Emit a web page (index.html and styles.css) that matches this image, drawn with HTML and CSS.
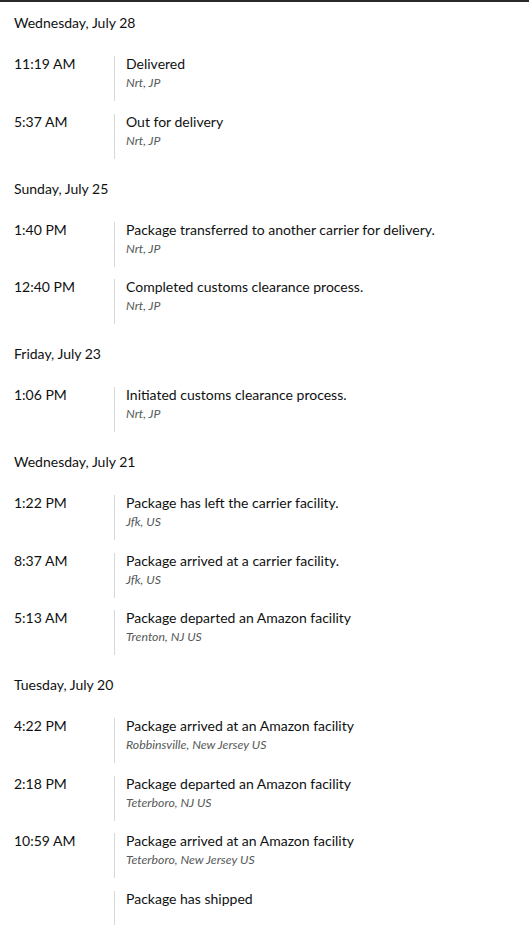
FILE: index.html
```html
<!DOCTYPE html>
<html lang="en">
<head>
<meta charset="utf-8">
<title>Tracking</title>
<link rel="stylesheet" href="styles.css">
</head>
<body>
<main class="tracking">
  <section class="day">
    <h3 class="day-title">Wednesday, July 28</h3>
    <ul class="events">
      <li class="event"><span class="time">11:19 AM</span><div class="detail"><div class="status">Delivered</div><div class="loc">Nrt, JP</div></div></li>
      <li class="event"><span class="time">5:37 AM</span><div class="detail"><div class="status">Out for delivery</div><div class="loc">Nrt, JP</div></div></li>
    </ul>
  </section>
  <section class="day">
    <h3 class="day-title">Sunday, July 25</h3>
    <ul class="events">
      <li class="event"><span class="time">1:40 PM</span><div class="detail"><div class="status">Package transferred to another carrier for delivery.</div><div class="loc">Nrt, JP</div></div></li>
      <li class="event"><span class="time">12:40 PM</span><div class="detail"><div class="status">Completed customs clearance process.</div><div class="loc">Nrt, JP</div></div></li>
    </ul>
  </section>
  <section class="day">
    <h3 class="day-title">Friday, July 23</h3>
    <ul class="events">
      <li class="event"><span class="time">1:06 PM</span><div class="detail"><div class="status">Initiated customs clearance process.</div><div class="loc">Nrt, JP</div></div></li>
    </ul>
  </section>
  <section class="day">
    <h3 class="day-title">Wednesday, July 21</h3>
    <ul class="events">
      <li class="event"><span class="time">1:22 PM</span><div class="detail"><div class="status">Package has left the carrier facility.</div><div class="loc">Jfk, US</div></div></li>
      <li class="event"><span class="time">8:37 AM</span><div class="detail"><div class="status">Package arrived at a carrier facility.</div><div class="loc">Jfk, US</div></div></li>
      <li class="event"><span class="time">5:13 AM</span><div class="detail"><div class="status">Package departed an Amazon facility</div><div class="loc">Trenton, NJ US</div></div></li>
    </ul>
  </section>
  <section class="day">
    <h3 class="day-title">Tuesday, July 20</h3>
    <ul class="events">
      <li class="event"><span class="time">4:22 PM</span><div class="detail"><div class="status">Package arrived at an Amazon facility</div><div class="loc">Robbinsville, New Jersey US</div></div></li>
      <li class="event"><span class="time">2:18 PM</span><div class="detail"><div class="status">Package departed an Amazon facility</div><div class="loc">Teterboro, NJ US</div></div></li>
      <li class="event"><span class="time">10:59 AM</span><div class="detail"><div class="status">Package arrived at an Amazon facility</div><div class="loc">Teterboro, New Jersey US</div></div></li>
      <li class="event"><span class="time"></span><div class="detail"><div class="status">Package has shipped</div></div></li>
    </ul>
  </section>
</main>
</body>
</html>
```

FILE: styles.css
```css
html, body {
  margin: 0;
  padding: 0;
  background: #ffffff;
}
body {
  border-top: 2px solid #2a2a2a;
  font-family: Lato, "Liberation Sans", sans-serif;
  color: #0f1111;
  font-size: 14px;
}
.tracking {
  padding: 11px 0 0 14px;
}
.day {
  display: flex;
  flex-direction: column;
}
.day + .day {
  margin-top: 20px;
}
.day-title {
  margin: 0;
  font-size: 14px;
  font-weight: 400;
  line-height: 20px;
}
.events {
  list-style: none;
  margin: 23px 0 0;
  padding: 0;
  display: flex;
  flex-direction: column;
  gap: 12.5px;
}
.event {
  display: flex;
  min-height: 45px;
}
.time {
  width: 100px;
  flex: none;
  line-height: 16px;
}
.detail {
  border-left: 1px solid #d5d9d9;
  padding-left: 11px;
}
.status {
  line-height: 16px;
}
.loc {
  margin-top: 3px;
  font-size: 12.3px;
  font-style: italic;
  line-height: 16px;
  color: #565959;
}
```
